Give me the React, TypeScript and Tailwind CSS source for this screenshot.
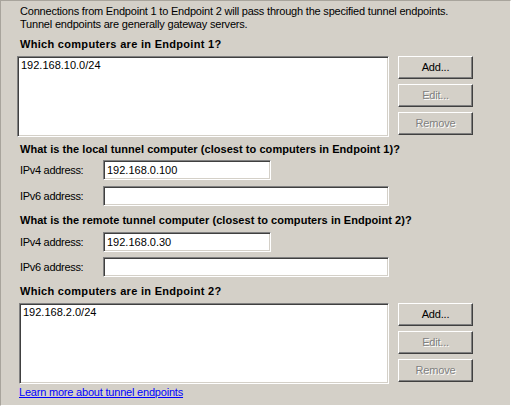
import React from "react";

const sunken =
  "bg-white border border-t-[#808080] border-l-[#808080] border-r-white border-b-white shadow-[inset_1px_1px_0_#404040,inset_-1px_-1px_0_#d4d0c8]";

function Button({ label, disabled }: { label: string; disabled?: boolean }) {
  return (
    <button
      type="button"
      className={
        "w-[75px] h-[23px] bg-[#d4d0c8] border border-t-white border-l-white border-r-[#404040] border-b-[#404040] shadow-[inset_-1px_-1px_0_#808080] text-[11px] leading-[13px] tracking-[-0.2px] " +
        (disabled ? "text-[#808080] [text-shadow:1px_1px_0_#ffffff]" : "text-black")
      }
    >
      {label}
    </button>
  );
}

function EndpointList({ value, left }: { value: string; left: string }) {
  return (
    <div className="flex">
      <div className={sunken + " h-[81px] pl-[3px] pt-[2px] " + left}>{value}</div>
      <div className="ml-[9px] flex flex-col gap-[5px]">
        <Button label="Add..." />
        <Button label="Edit..." disabled />
        <Button label="Remove" disabled />
      </div>
    </div>
  );
}

function AddressRow({ label, value, width }: { label: string; value: string; width: string }) {
  return (
    <div className="flex items-center ml-[19px]">
      <span className="w-[83px] tracking-[-0.3px]">{label}</span>
      <div className={sunken + " h-[20px] pl-[3px] flex items-center " + width}>{value}</div>
    </div>
  );
}

export default function App() {
  return (
    <div
      className="w-[511px] h-[406px] bg-[#d4d0c8] border border-t-[#a8a49c] border-l-[#a8a49c] border-r-white border-b-white flex flex-col text-[11px] leading-[13px] text-black"
      style={{ fontFamily: '"Liberation Sans", Arial, sans-serif' }}
    >
      <p className="ml-[19px] mt-[4px] tracking-[-0.2px]">
        Connections from Endpoint 1 to Endpoint 2 will pass through the specified tunnel endpoints.
        <br />
        Tunnel endpoints are generally gateway servers.
      </p>

      <h2 className="ml-[19px] mt-[7px] font-bold tracking-[0.3px]">Which computers are in Endpoint 1?</h2>
      <div className="mt-[5px] ml-[16px]">
        <EndpointList value="192.168.10.0/24" left="w-[372px]" />
      </div>

      <h2 className="ml-[19px] mt-[6px] font-bold tracking-[0.05px]">
        What is the local tunnel computer (closest to computers in Endpoint 1)?
      </h2>
      <div className="mt-[4px] flex flex-col gap-[6px]">
        <AddressRow label="IPv4 address:" value="192.168.0.100" width="w-[168px]" />
        <AddressRow label="IPv6 address:" value="" width="w-[286px]" />
      </div>

      <h2 className="ml-[19px] mt-[8px] font-bold tracking-[0.05px]">
        What is the remote tunnel computer (closest to computers in Endpoint 2)?
      </h2>
      <div className="mt-[5px] flex flex-col gap-[5px]">
        <AddressRow label="IPv4 address:" value="192.168.0.30" width="w-[168px]" />
        <AddressRow label="IPv6 address:" value="" width="w-[286px]" />
      </div>

      <h2 className="ml-[19px] mt-[8px] font-bold tracking-[0.3px]">Which computers are in Endpoint 2?</h2>
      <div className="mt-[5px] ml-[18px]">
        <EndpointList value="192.168.2.0/24" left="w-[370px]" />
      </div>

      <a href="#" className="ml-[18px] mt-[2px] text-[#0000ff] underline w-fit tracking-[-0.2px]">
        Learn more about tunnel endpoints
      </a>
    </div>
  );
}
